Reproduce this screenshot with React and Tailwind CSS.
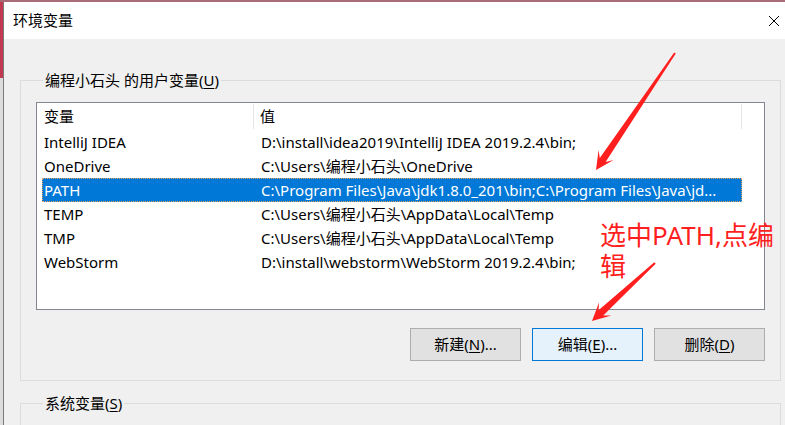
import React from 'react';

const font = { fontFamily: '"Noto Sans", "Noto Sans CJK SC", sans-serif' };

const rows = [
  ['IntelliJ IDEA', 'D:\\install\\idea2019\\IntelliJ IDEA 2019.2.4\\bin;'],
  ['OneDrive', 'C:\\Users\\编程小石头\\OneDrive'],
  ['PATH', 'C:\\Program Files\\Java\\jdk1.8.0_201\\bin;C:\\Program Files\\Java\\jd...'],
  ['TEMP', 'C:\\Users\\编程小石头\\AppData\\Local\\Temp'],
  ['TMP', 'C:\\Users\\编程小石头\\AppData\\Local\\Temp'],
  ['WebStorm', 'D:\\install\\webstorm\\WebStorm 2019.2.4\\bin;'],
];

// tapering red annotation arrow, from start (thin) to tip
const arrowPoints = (sx, sy, tx, ty) => {
  const dx = tx - sx;
  const dy = ty - sy;
  const len = Math.hypot(dx, dy);
  const ux = dx / len;
  const uy = dy / len;
  const nx = -uy;
  const ny = ux;
  const at = (d, w) => [tx - ux * d + nx * w, ty - uy * d + ny * w];
  const pts = [
    [sx + nx * 1, sy + ny * 1],
    at(12, 3.5),
    at(18, 9),
    [tx, ty],
    at(18, -9),
    at(12, -3.5),
    [sx - nx * 1, sy - ny * 1],
  ];
  return pts.map((p) => p.map((v) => v.toFixed(1)).join(',')).join(' ');
};

const Button = ({ label, accel, rest, active }) => (
  <button
    className={`w-[111px] h-[33px] text-[15px] text-black border ${
      active ? 'border-[#0078d7] bg-[#e5f1fb]' : 'border-[#adadad] bg-[#e1e1e1]'
    }`}
  >
    {label}(<span className="underline underline-offset-2">{accel}</span>){rest}
  </button>
);

export default function App() {
  return (
    <div className="relative w-[785px] h-[425px] overflow-hidden flex flex-col bg-[#f0f0f0]" style={font}>
      <div className="h-[2px] shrink-0 bg-[#a86b78]" />
      <div className="flex flex-1 min-h-0">
        <div className="w-[3px] shrink-0 flex flex-col">
          <div className="h-[76px] bg-[#c23a52]" />
          <div className="flex-1 bg-[#dcdcdc]" />
        </div>
        <div className="flex-1 flex flex-col border-l border-[#7a7a7a]">
          <div className="h-[37px] shrink-0 bg-white flex items-center justify-between pl-[9px] pr-[5px]">
            <span className="text-[15px] text-black">环境变量</span>
            <svg width="12" height="12" viewBox="0 0 12 12" className="mr-[0px]">
              <path d="M1 1L11 11M11 1L1 11" stroke="#000" strokeWidth="1" />
            </svg>
          </div>
          <div className="flex-1 pl-[16px] pr-[4px] pt-[31px]">
            <fieldset className="border border-[#dcdcdc] px-[15px] pb-[19px] pt-[12px]">
              <legend className="ml-[7px] px-[2px] text-[15px] leading-[20px] text-black">
                编程小石头 的用户变量(<span className="underline underline-offset-2">U</span>)
              </legend>
              <div className="h-[208px] border border-[#828790] bg-white flex flex-col">
                <div className="h-[27px] shrink-0 flex text-[15px] text-black">
                  <div className="w-[217px] pl-[7px] flex items-center border-r border-[#e5e5e5] mt-[1px] mb-[1px]">变量</div>
                  <div className="w-[488px] pl-[6px] flex items-center border-r border-[#e5e5e5] mt-[1px] mb-[1px]">值</div>
                </div>
                {rows.map(([name, value], i) => {
                  const sel = i === 2;
                  return (
                    <div
                      key={name}
                      className={`ml-[5px] w-[700px] h-[24px] shrink-0 flex items-center text-[15px] whitespace-nowrap ${
                        sel ? 'bg-[#0078d7] text-white outline outline-1 outline-dotted outline-[#e9a15b] -outline-offset-1' : 'text-black'
                      }`}
                    >
                      <div className="w-[212px] pl-[2px]">{name}</div>
                      <div className="flex-1 pl-[7px] overflow-hidden">{value}</div>
                    </div>
                  );
                })}
              </div>
              <div className="flex justify-end gap-[11px] mt-[18px]">
                <Button label="新建" accel="N" rest="..." />
                <Button label="编辑" accel="E" rest="..." active />
                <Button label="删除" accel="D" rest="" />
              </div>
            </fieldset>
            <fieldset className="mt-[12px] border border-[#dcdcdc] px-[15px] pt-[12px] h-[60px]">
              <legend className="ml-[7px] px-[2px] text-[15px] leading-[20px] text-black">
                系统变量(<span className="underline underline-offset-2">S</span>)
              </legend>
              <div className="h-[40px] border border-[#828790] bg-white" />
            </fieldset>
          </div>
        </div>
      </div>

      <div className="absolute left-[600px] top-[220px] w-[180px] text-[26px] leading-[31px] text-[#ff1f1f]">
        选中PATH,点编辑
      </div>
      <svg className="absolute left-0 top-0 pointer-events-none" width="785" height="425">
        <polygon points={arrowPoints(675, 53, 596, 170)} fill="#ff1f1f" />
        <polygon points={arrowPoints(655, 263, 592, 321)} fill="#ff1f1f" />
      </svg>
    </div>
  );
}
